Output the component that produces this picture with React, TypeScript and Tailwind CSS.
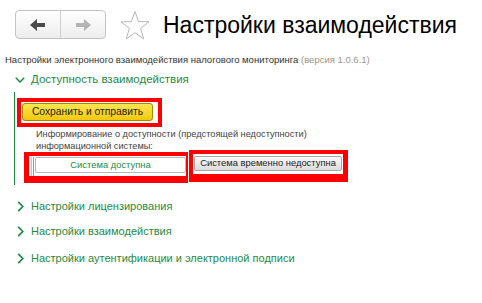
import React from "react";

const GREEN = "#1f8a45";

function ArrowLeft({ color }: { color: string }) {
  return (
    <svg width="16" height="12" viewBox="0 0 16 12">
      <path d="M0 6 L7 0 L7 4 L15 4 L15 8 L7 8 L7 12 Z" fill={color} />
    </svg>
  );
}
function ArrowRight({ color }: { color: string }) {
  return (
    <svg width="16" height="12" viewBox="0 0 16 12">
      <path d="M16 6 L9 0 L9 4 L1 4 L1 8 L9 8 L9 12 Z" fill={color} />
    </svg>
  );
}

function Star() {
  return (
    <svg width="30" height="31" viewBox="0 0 30 31">
      <path
        d="M15 1.5 L18.6 11.6 L29 11.8 L20.7 18.3 L23.7 29 L15 22.7 L6.3 29 L9.3 18.3 L1 11.8 L11.4 11.6 Z"
        fill="none"
        stroke="#b8b8b8"
        strokeWidth="1"
      />
    </svg>
  );
}

function ChevronDown() {
  return (
    <svg width="10" height="6" viewBox="0 0 10 6">
      <path d="M0.8 0.8 L5 5 L9.2 0.8" fill="none" stroke={GREEN} strokeWidth="1.5" />
    </svg>
  );
}
function ChevronRight() {
  return (
    <svg width="7" height="11" viewBox="0 0 7 11">
      <path d="M1.2 0.8 L5.8 5.5 L1.2 10.2" fill="none" stroke={GREEN} strokeWidth="1.7" />
    </svg>
  );
}

function Collapsed({ text, extra }: { text: string; extra?: boolean }) {
  return (
    <div className={extra ? "flex items-center h-[25px] mt-[2px]" : "flex items-center h-[25px]"}>
      <div className="w-[31px] flex justify-end pr-[7px]">
        <ChevronRight />
      </div>
      <span className="text-[11px] text-[#1f8a45]">{text}</span>
    </div>
  );
}

export default function App() {
  return (
    <div
      className="w-[482px] h-[303px] bg-white overflow-hidden text-[#333]"
      style={{ fontFamily: '"Liberation Sans", Arial, sans-serif' }}
    >
      {/* header */}
      <div className="flex items-center pl-[15px] pt-[9px] h-[40px]">
        <div className="flex w-[91px] h-[29px] rounded-[4px] border border-[#c4c4c4] bg-gradient-to-b from-white to-[#ededed]">
          <div className="flex-1 flex items-center justify-center border-r border-[#d0d0d0]">
            <ArrowLeft color="#4a4a4a" />
          </div>
          <div className="flex-1 flex items-center justify-center">
            <ArrowRight color="#b4b4b4" />
          </div>
        </div>
        <div className="ml-[14px] mt-[2px]">
          <Star />
        </div>
        <div className="ml-[13px] text-[23px] text-black leading-none mt-[1px]">
          Настройки взаимодействия
        </div>
      </div>

      {/* subtitle */}
      <div className="pl-[5px] mt-[13px] text-[9.5px] leading-[14px] text-[#333]">
        Настройки электронного взаимодействия налогового мониторинга{" "}
        <span className="text-[#a0957d]">(версия 1.0.6.1)</span>
      </div>

      {/* expanded section */}
      <div className="flex items-center h-[20px] mt-[3px]">
        <div className="w-[31px] flex justify-end pr-[6px]">
          <ChevronDown />
        </div>
        <span className="text-[11.5px] text-[#1f8a45]">Доступность взаимодействия</span>
      </div>

      <div className="ml-[14px] border-l border-[#1f8a45] mt-[2px] pt-[6px] h-[93px]">
        <div className="ml-[2px] w-[145px] border-4 border-[#ff0000] pt-[1px] pl-[1px] pr-[5px] pb-[2px]">
          <div className="h-[18px] rounded-[3px] border border-[#a08a00] bg-gradient-to-b from-[#fbe64a] to-[#f2c900] flex items-center justify-center text-[10.3px] text-[#222]">
            Сохранить и отправить
          </div>
        </div>
        <div className="ml-[21px] mt-[1px] text-[9.2px] leading-[12px] text-[#444]">
          Информирование о доступности (предстоящей недоступности)
          <br />
          информационной системы:
        </div>
        <div className="flex ml-[9px] -mt-[2px]">
          <div className="w-[164px] h-[31px] border-[#ff0000] border-t-4 border-l-[5px] border-b-[7px] border-r-[2px] mt-[2px] flex items-stretch pt-[1px]">
            <div className="w-[2px]" />
            <div className="w-[1px] bg-[#f5d400]" />
            <div className="w-[1px]" />
            <div className="w-[1px] bg-[#f08a00]" />
            <div className="w-[1px]" />
            <div className="flex-1 h-[16px] rounded-[2px] border border-[#b8b8b8] bg-white flex items-center justify-center text-[9.4px] text-[#1f8a45]">
              Система доступна
            </div>
          </div>
          <div className="ml-[1px] w-[159px] h-[32px] border-[#ff0000] border-t-4 border-l-4 border-b-[8px] border-r-[5px] flex pl-[1px] pt-[2px] pr-[1px]">
            <div className="flex-1 h-[15px] rounded-[2px] border border-[#a8a8a8] bg-gradient-to-b from-[#fafafa] to-[#dcdcdc] flex items-center justify-center text-[9.4px] text-[#222]">
              Система временно недоступна
            </div>
          </div>
        </div>
      </div>

      <div className="mt-[9px]">
        <Collapsed text="Настройки лицензирования" />
        <Collapsed text="Настройки взаимодействия" />
        <Collapsed text="Настройки аутентификации и электронной подписи" extra />
      </div>
    </div>
  );
}
